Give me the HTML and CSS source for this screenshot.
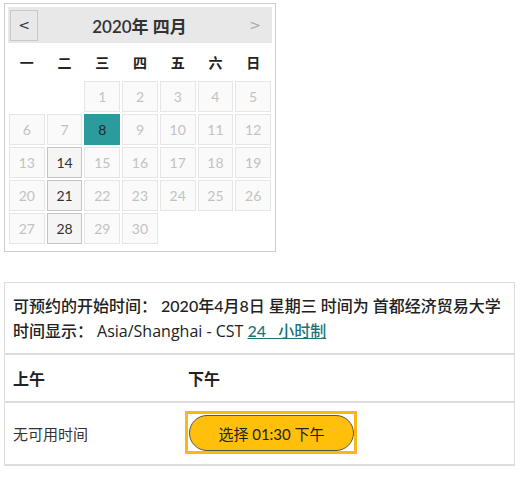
FILE: index.html
```html
<!DOCTYPE html>
<html lang="zh-CN">
<head>
<meta charset="utf-8">
<title>预约</title>
<link rel="stylesheet" href="styles.css">
</head>
<body>
<div class="page">
  <div class="cal">
    <div class="cal-head">
      <button class="nav prev">&lt;</button>
      <div class="title">2020年 四月</div>
      <span class="nav next">&gt;</span>
    </div>
    <div class="weekdays">
      <span>一</span><span>二</span><span>三</span><span>四</span><span>五</span><span>六</span><span>日</span>
    </div>
    <div class="days">
      <span class="empty"></span><span class="empty"></span>
      <span class="d off">1</span><span class="d off">2</span><span class="d off">3</span><span class="d off">4</span><span class="d off">5</span>
      <span class="d off">6</span><span class="d off">7</span><span class="d sel">8</span><span class="d off">9</span><span class="d off">10</span><span class="d off">11</span><span class="d off">12</span>
      <span class="d off">13</span><span class="d on">14</span><span class="d off">15</span><span class="d off">16</span><span class="d off">17</span><span class="d off">18</span><span class="d off">19</span>
      <span class="d off">20</span><span class="d on">21</span><span class="d off">22</span><span class="d off">23</span><span class="d off">24</span><span class="d off">25</span><span class="d off">26</span>
      <span class="d off">27</span><span class="d on">28</span><span class="d off">29</span><span class="d off">30</span>
    </div>
  </div>

  <div class="slots">
    <div class="row info">
      <div>可预约的开始时间： 2020年4月8日 星期三 时间为 首都经济贸易大学</div>
      <div>时间显示： <span class="latin">Asia/Shanghai - CST</span> <a href="#" class="fmt">24&nbsp;&nbsp;&nbsp;小时制</a></div>
    </div>
    <div class="row cols head">
      <div>上午</div>
      <div>下午</div>
    </div>
    <div class="row cols body">
      <div class="none">无可用时间</div>
      <div><span class="focus"><button class="pick">选择 01:30 下午</button></span></div>
    </div>
  </div>
</div>
</body>
</html>
```

FILE: styles.css
```css
* { box-sizing: border-box; }
body {
  margin: 0;
  background: #fff;
  font-family: "Lato", "Noto Sans CJK SC", sans-serif;
  color: #222;
}
.page {
  padding: 3px 0 0 4px;
}
.cal {
  width: 272px;
  border: 1px solid #ccc;
  padding: 3px 3px 7px 3px;
}
.cal-head {
  display: flex;
  align-items: center;
  justify-content: space-between;
  height: 36px;
  background: #e8e8e8;
  padding: 0 2px;
}
.nav {
  width: 28px;
  height: 31px;
  font-family: "DejaVu Sans", sans-serif;
  font-size: 14px;
  line-height: 29px;
  text-align: center;
  color: #333;
  padding: 0;
}
.prev {
  background: #e8e8e8;
  border: 1px solid #c8c8c8;
}
.next {
  color: #aaa;
  border: 1px solid transparent;
  margin-right: 1px;
}
.title {
  font-size: 17px;
  font-weight: 600;
  color: #333;
}
.weekdays {
  display: grid;
  grid-template-columns: repeat(7, 1fr);
  column-gap: 2px;
  height: 38px;
  align-items: center;
  padding: 0 1px;
  font-family: "Noto Sans CJK SC", sans-serif;
  font-size: 14px;
  font-weight: 600;
  text-align: center;
  color: #222;
}
.days {
  display: grid;
  grid-template-columns: repeat(7, 1fr);
  gap: 2px 2px;
  padding: 0 1px;
}
.d {
  height: 31px;
  display: flex;
  align-items: center;
  justify-content: center;
  font-size: 14px;
  border: 1px solid #e6e6e6;
  background: #fafafa;
}
.off { color: #c2c2c2; }
.on {
  color: #333;
  background: #f5f5f5;
  border-color: #c4c4c4;
}
.sel {
  color: #1d2b2b;
  background: #2b9c9e;
  border-color: #2b9c9e;
}

.slots {
  margin-top: 30px;
  width: 511px;
  border: 1px solid #ddd;
  border-bottom-width: 2px;
}
.row + .row {
  border-top: 2px solid #ddd;
}
.info {
  padding: 10px 8px 9px 8px;
  font-size: 16px;
  line-height: 25px;
  font-weight: 500;
  color: #222;
}
.latin {
  font-family: "Open Sans", "Noto Sans CJK SC", sans-serif;
  font-size: 16px;
  font-weight: 500;
}
.fmt {
  color: #1c7479;
  text-decoration: underline;
}
.cols {
  display: grid;
  grid-template-columns: 175px 1fr;
  align-items: center;
  padding-left: 8px;
}
.head {
  height: 48px;
  font-size: 16px;
  font-weight: 700;
}
.body {
  height: 63px;
}
.none {
  font-size: 15px;
  color: #333;
}
.focus {
  display: inline-block;
  margin-left: -3px;
  margin-top: -2px;
  border: 3px solid #fbb713;
  padding: 1px 0 0 1px;
  background: #fff;
  vertical-align: top;
}
.pick {
  display: block;
  width: 165px;
  height: 36px;
  border: 1px solid #555;
  border-radius: 18px;
  background: #ffbf0b;
  color: #222;
  font-family: "Lato", "Noto Sans CJK SC", sans-serif;
  font-size: 15px;
  padding: 0;
}
```
